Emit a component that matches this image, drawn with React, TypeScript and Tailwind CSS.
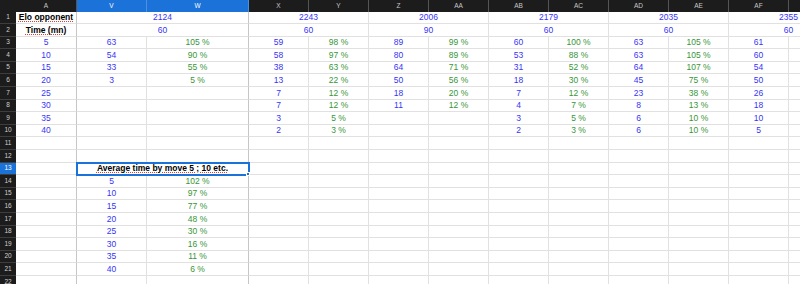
import type { ReactNode } from 'react';

const colHeads = ['A', 'V', 'W', 'X', 'Y', 'Z', 'AA', 'AB', 'AC', 'AD', 'AE', 'AF', 'AG'];

const elo = ['2124', '2243', '2006', '2179', '2035', '2355'];
const times = ['60', '60', '90', '60', '60', '60'];
const moves = [5, 10, 15, 20, 25, 30, 35, 40];

// [moves played, % of time used] per opponent, rows 3..10
const blocks: number[][][] = [
  [[63, 105], [54, 90], [33, 55], [3, 5]],
  [[59, 98], [58, 97], [38, 63], [13, 22], [7, 12], [7, 12], [3, 5], [2, 3]],
  [[89, 99], [80, 89], [64, 71], [50, 56], [18, 20], [11, 12]],
  [[60, 100], [53, 88], [31, 52], [18, 30], [7, 12], [4, 7], [3, 5], [2, 3]],
  [[63, 105], [63, 105], [64, 107], [45, 75], [23, 38], [8, 13], [6, 10], [6, 10]],
  [[61], [60], [54], [50], [26], [18], [10], [5]]
];

const average = [102, 97, 77, 48, 30, 16, 11, 6];

const blue = 'text-[#3535f8]';
const green = 'text-[#379637]';

function Cell({
  children,
  span,
  className = ''
}: {
  children?: ReactNode;
  span?: boolean;
  className?: string;
}) {
  return (
    <div
      className={`flex items-center justify-center overflow-visible whitespace-nowrap border-b border-r border-[#e1e1e1] ${
        span ? 'col-span-2' : ''
      } ${className}`}
    >
      {children}
    </div>
  );
}

function RowHead({ n, active }: { n: number; active?: boolean }) {
  return (
    <div
      className={`flex items-center justify-center border-b border-[#3d3d3d] text-[6.5px] ${
        active ? 'bg-[#1b72d8] text-white' : 'bg-[#1c1c1c] text-[#d0d0d0]'
      }`}
    >
      {n}
    </div>
  );
}

function Label({ children }: { children: ReactNode }) {
  return (
    <span className="font-bold text-black underline decoration-[#e0403a] decoration-dotted decoration-1 underline-offset-[1px]">
      {children}
    </span>
  );
}

function edge(col: number) {
  // darker column lines after A and W
  return col === 0 || col === 2 ? 'border-r-[#c6c6c6]' : '';
}

export default function App() {
  const rows: ReactNode[] = [];

  for (let r = 1; r <= 22; r++) {
    rows.push(<RowHead key={`h${r}`} n={r} active={r === 13} />);

    if (r === 1 || r === 2) {
      rows.push(
        <Cell key={`a${r}`} className={edge(0)}>
          <Label>{r === 1 ? 'Elo opponent' : 'Time (mn)'}</Label>
        </Cell>
      );
      (r === 1 ? elo : times).forEach((v, i) => {
        rows.push(
          <Cell key={`m${r}-${i}`} span className={`${blue} ${i === 0 ? 'border-r-[#c6c6c6]' : ''}`}>
            {v}
          </Cell>
        );
      });
      continue;
    }

    if (r === 13) {
      rows.push(<Cell key="a13" className={edge(0)} />);
      rows.push(
        <div
          key="sel"
          className="relative col-span-2 flex items-center justify-center whitespace-nowrap border-b border-r border-[#c6c6c6] outline-2 -outline-offset-1 outline-[#1b72d8] outline"
        >
          <Label>Average time by move 5 ; 10 etc.</Label>
          <span className="absolute -bottom-[2px] -right-[2px] h-[4px] w-[4px] border border-white bg-[#1b72d8]" />
        </div>
      );
      for (let c = 3; c < colHeads.length; c++) rows.push(<Cell key={`e13-${c}`} />);
      continue;
    }

    const di = r - 3;
    const ai = r - 14;

    // column A
    rows.push(
      <Cell key={`a${r}`} className={`${blue} ${edge(0)}`}>
        {r >= 3 && r <= 10 ? moves[di] : ''}
      </Cell>
    );

    // V, W
    if (r >= 14 && r <= 21) {
      rows.push(<Cell key={`v${r}`} className={blue}>{moves[ai]}</Cell>);
      rows.push(<Cell key={`w${r}`} className={`${green} ${edge(2)}`}>{average[ai]} %</Cell>);
    } else {
      const d = r >= 3 && r <= 10 ? blocks[0][di] : undefined;
      rows.push(<Cell key={`v${r}`} className={blue}>{d ? d[0] : ''}</Cell>);
      rows.push(<Cell key={`w${r}`} className={`${green} ${edge(2)}`}>{d ? `${d[1]} %` : ''}</Cell>);
    }

    // X .. AG
    for (let b = 1; b < blocks.length; b++) {
      const d = r >= 3 && r <= 10 ? blocks[b][di] : undefined;
      rows.push(<Cell key={`n${r}-${b}`} className={blue}>{d ? d[0] : ''}</Cell>);
      rows.push(
        <Cell key={`p${r}-${b}`} className={green}>
          {d && d[1] !== undefined ? `${d[1]} %` : ''}
        </Cell>
      );
    }
  }

  return (
    <div className="h-[284px] w-[800px] overflow-hidden bg-white font-['Liberation_Sans',Arial,sans-serif] text-[8.5px] leading-none">
      <div className="grid grid-cols-[16px_61px_70px_102px_repeat(10,60px)] grid-rows-[11.5px_repeat(22,12.6px)]">
        <div className="bg-[#1c1c1c]" />
        {colHeads.map((h, i) => (
          <div
            key={h}
            className={`flex items-center justify-center border-r text-[6.5px] ${
              i === 1 || i === 2
                ? 'border-[#4f8fe0] bg-[#1b72d8] text-white'
                : 'border-[#555555] bg-[#1c1c1c] text-[#c8c8c8]'
            }`}
          >
            {h}
          </div>
        ))}
        {rows}
      </div>
    </div>
  );
}
